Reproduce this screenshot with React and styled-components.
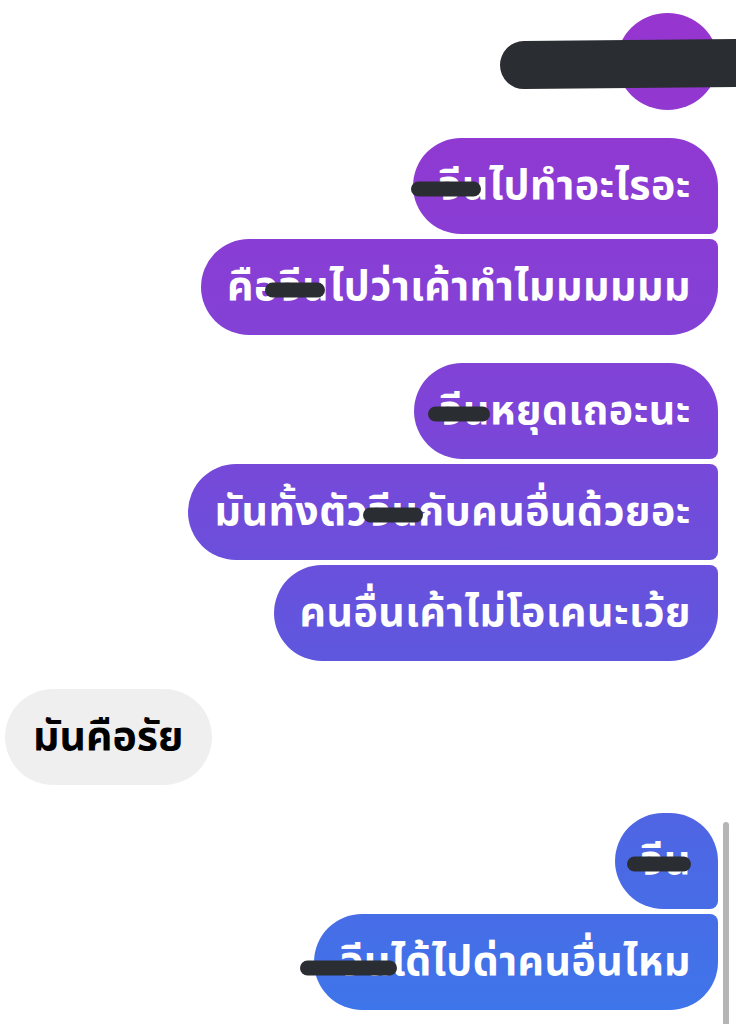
import styled, { createGlobalStyle, css } from 'styled-components';

const GlobalStyle = createGlobalStyle`
	html, body {
		margin: 0;
		padding: 0;
		background: #ffffff;
	}
	body {
		font-family: 'Noto Sans', 'DejaVu Sans', sans-serif;
	}
`;

const BIG = '48px';
const SMALL = '8px';

// messages grouped the way the chat groups them
const groups = [
	{ side: 'out', items: [{ cover: true }] },
	{
		side: 'out',
		items: [
			{ parts: [{ r: 'จีน', bar: [-28, 70, 0] }, 'ไปทำอะไรอะ'] },
			{ parts: ['คือ', { r: 'จีน', bar: [-14, 60, 0] }, 'ไปว่าเค้าทำไมมมมมม'] },
		],
	},
	{
		side: 'out',
		items: [
			{ parts: [{ r: 'จีน', bar: [-12, 62, 0] }, 'หยุดเถอะนะ'] },
			{ parts: ['มันทั้งตัว', { r: 'จีน', bar: [-5, 60, 0] }, 'กับคนอื่นด้วยอะ'] },
			{ parts: ['คนอื่นเค้าไม่โอเคนะเว้ย'] },
		],
	},
	{ side: 'in', items: [{ parts: ['มันคือรัย'] }] },
	{
		side: 'out',
		items: [
			{ parts: [{ r: 'จีน', bar: [-14, 64, 0] }] },
			{ parts: [{ r: 'จีน', bar: [-40, 97, 3] }, 'ได้ไปด่าคนอื่นไหม'] },
		],
	},
];

const radius = (side, first, last) => {
	if (side === 'in') return BIG;
	const tr = first ? BIG : SMALL;
	const br = last ? BIG : SMALL;
	return `${BIG} ${tr} ${br} ${BIG}`;
};

const App = () => {
	return (
		<>
			<GlobalStyle />
			<Thread>
				{groups.map((g, gi) => (
					<Group key={gi} side={g.side}>
						{g.items.map((m, i) => {
							const first = i === 0;
							const last = i === g.items.length - 1;
							if (m.cover) {
								return (
									<Bubble key={i} side="out" $radius={BIG} $round>
										<CoverBar />
									</Bubble>
								);
							}
							return (
								<Bubble
									key={i}
									side={g.side}
									$radius={radius(g.side, first, last)}
								>
									{m.parts.map((p, pi) =>
										typeof p === 'string' ? (
											<span key={pi}>{p}</span>
										) : (
											<Redacted key={pi}>
												{p.r}
												<Bar $left={p.bar[0]} $width={p.bar[1]} $shift={p.bar[2]} />
											</Redacted>
										)
									)}
								</Bubble>
							);
						})}
					</Group>
				))}
			</Thread>
			<Scrollbar />
		</>
	);
};

export default App;

const Thread = styled.div`
	display: flex;
	flex-direction: column;
	gap: 28px;
	padding: 13px 18px 0 5px;
	height: 1024px;
	box-sizing: border-box;
	overflow: hidden;
`;

const Group = styled.div`
	display: flex;
	flex-direction: column;
	gap: 5px;
	align-items: ${props => (props.side === 'in' ? 'flex-start' : 'flex-end')};
`;

const Bubble = styled.div`
	position: relative;
	height: 96px;
	box-sizing: border-box;
	display: flex;
	align-items: center;
	padding: 0 27px 0 26px;
	border-radius: ${props => props.$radius};
	font-family: 'Noto Sans Thai', 'Noto Sans', 'DejaVu Sans', sans-serif;
	font-size: 41px;
	letter-spacing: 0.5px;
	font-weight: 700;
	white-space: nowrap;
	${props =>
		props.side === 'in'
			? css`
					background: #efefef;
					color: #000000;
					letter-spacing: 0;
					padding: 0 28px 0 28px;
			  `
			: css`
					background: linear-gradient(180deg, #9834cf 0%, #7e44d7 40%, #5d58df 65%, #3d76ea 100%) fixed;
					color: #ffffff;
			  `}
	${props =>
		props.$round &&
		css`
			width: 101px;
			height: 97px;
			padding: 0;
			border-radius: 50%;
		`}
`;

const Redacted = styled.span`
	position: relative;
	display: inline-block;
`;

const Bar = styled.span`
	position: absolute;
	top: 50%;
	left: ${props => props.$left}px;
	width: ${props => props.$width}px;
	margin-top: ${props => props.$shift}px;
	height: 15px;
	transform: translateY(-30%);
	border-radius: 8px;
	background: #2a2d31;
`;

const CoverBar = styled.div`
	position: absolute;
	left: -117px;
	top: 27px;
	width: 260px;
	height: 48px;
	border-radius: 24px;
	background: #2a2d31;
	transform: rotate(-0.6deg);
`;

const Scrollbar = styled.div`
	position: fixed;
	left: 723px;
	top: 822px;
	width: 6px;
	height: 210px;
	border-radius: 3px;
	background: #b5b5b5;
`;
